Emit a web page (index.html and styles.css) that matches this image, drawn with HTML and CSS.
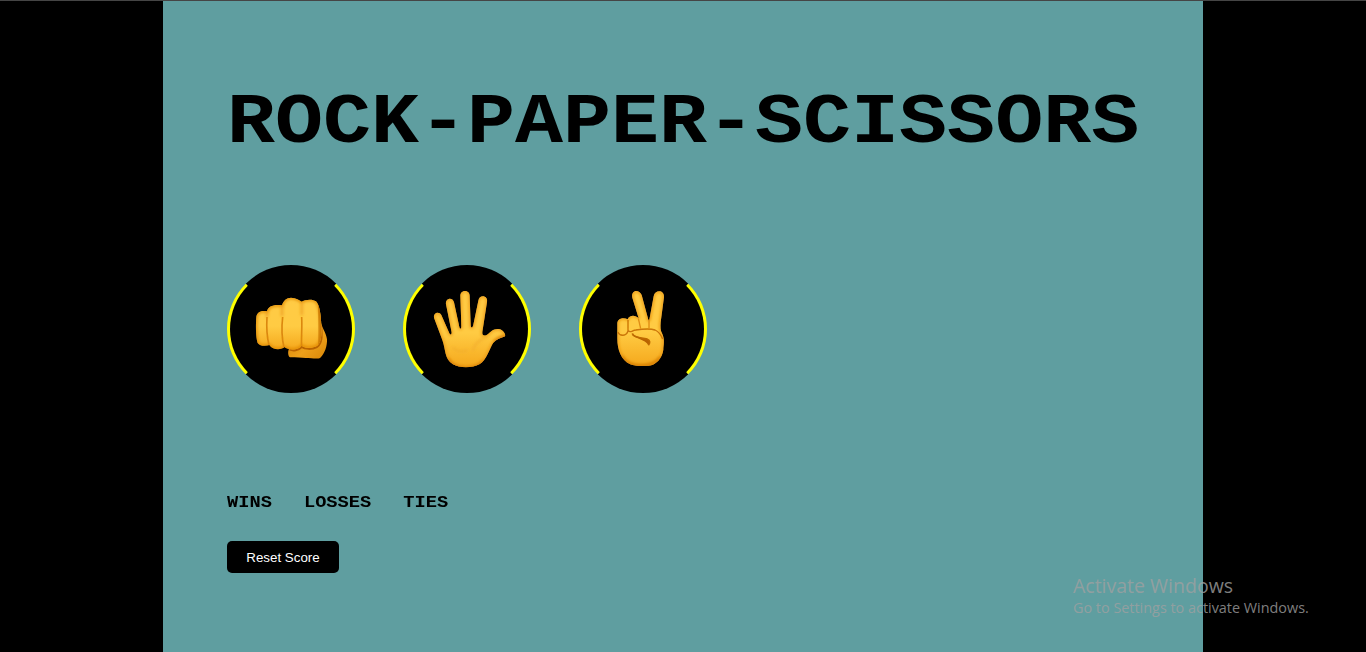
FILE: index.html
```html
<!DOCTYPE html>
<html lang="en">
<head>
<meta charset="utf-8">
<title>Rock-Paper-Scissors</title>
<link rel="stylesheet" href="styles.css">
</head>
<body>
<main class="game">
  <h1 class="title">ROCK-PAPER-SCISSORS</h1>
  <div class="moves">
    <button class="move" aria-label="Rock">
      <svg class="hand" viewBox="30 39 366 366">
        <defs>
          <linearGradient id="skin" x1="0" y1="0" x2="0" y2="1">
            <stop offset="0" stop-color="#ffcb45"/><stop offset=".55" stop-color="#ffcb43"/><stop offset="1" stop-color="#f5a81c"/>
          </linearGradient>
          <linearGradient id="thumb" x1="0" y1="0" x2="1" y2="1">
            <stop offset="0" stop-color="#c87600"/><stop offset=".6" stop-color="#eda01a"/><stop offset="1" stop-color="#d98708"/>
          </linearGradient>
          <filter id="soft" x="-30%" y="-30%" width="160%" height="160%"><feGaussianBlur stdDeviation="4"/></filter>
          <filter id="fine" x="-30%" y="-30%" width="160%" height="160%"><feGaussianBlur stdDeviation="1.8"/></filter>
          <clipPath id="fist"><path id="fistShape" d="M109 187C110 173 121 165 141 169C145 154 159 148 186 151C190 137 200 128 213 128C228 128 238 135 245 140C253 134 278 131 288 139C298 149 302 175 304 209C306 241 303 264 291 273C277 281 253 279 245 272C236 286 205 287 193 276C184 285 159 286 148 270C137 274 120 274 113 264C107 247 107 207 109 187Z"/></clipPath>
        </defs>
        <path fill="url(#thumb)" d="M302 200C306 220 318 231 321 253C322 273 314 296 301 308C291 315 265 307 210 307C203 304 203 287 208 280L246 267Z"/>
        <path filter="url(#fine)" fill="none" stroke="#b96300" stroke-width="6" d="M303 210C307 245 306 265 291 276C276 284 254 283 245 276C235 287 219 288 209 284"/>
        <use href="#fistShape" fill="url(#skin)"/>
        <g clip-path="url(#fist)" fill="none">
          <use href="#fistShape" stroke="#e28a05" stroke-width="8" filter="url(#soft)"/>
          <path filter="url(#fine)" stroke="#dc8810" stroke-width="5" d="M141 186C139 220 141 247 147 270M188 186C184 220 186 252 192 278M245 186C247 220 243 251 245 278"/>
          <path filter="url(#soft)" stroke="#e9941a" stroke-width="5" d="M141 169V187M186 151V184M245 140V181"/>
          <path filter="url(#soft)" stroke="#c77306" stroke-width="12" d="M296 145C303 180 304 250 299 276"/>
        </g>
      </svg>
    </button>
    <button class="move" aria-label="Paper">
      <svg class="hand" viewBox="30 39 366 366">
        <clipPath id="palm"><path id="palmShape" d="M114 188C112 172 130 169 136 180L160 235C164 243 169 237 166 227L150 148C147 130 169 124 174 142L190 216C192 224 196 222 196 214L193 122C193 103 221 103 221 122L224 211C225 221 230 219 232 209L247 137C250 117 277 121 273 141L259 231C258 243 265 243 272 240C286 229 292 220 309 222C322 224 330 239 327 244C315 248 300 254 292 263C282 276 272 316 250 328C229 339 192 340 171 328C144 311 150 285 139 255Z"/></clipPath>
        <use href="#palmShape" fill="url(#skin)"/>
        <g clip-path="url(#palm)" fill="none">
          <use href="#palmShape" stroke="#eb9817" stroke-width="7" filter="url(#soft)"/>
          <path filter="url(#soft)" stroke="#d98008" stroke-width="9" d="M155 311C175 349 238 348 264 319M296 262C308 248 319 246 330 244"/>
          <path filter="url(#soft)" stroke="#f1ac2b" stroke-width="5" d="M231 289C232 269 252 254 274 244M169 278C187 292 202 292 215 285"/>
        </g>
      </svg>
    </button>
    <button class="move" aria-label="Scissors">
      <svg class="hand" viewBox="30 39 366 366">
        <clipPath id="peace"><path id="peaceShape" d="M136 207C135 191 153 185 167 193C171 180 190 178 200 190L181 128C176 106 200 101 209 120L229 194C231 199 232 195 233 189L245 124C248 104 277 103 276 126L266 202C265 216 265 226 270 235C280 256 274 272 274 284C271 309 252 330 230 332C210 334 189 334 175 328C147 314 136 284 136 251Z"/></clipPath>
        <use href="#peaceShape" fill="url(#skin)"/>
        <g clip-path="url(#peace)" fill="none">
          <use href="#peaceShape" stroke="#e99311" stroke-width="7" filter="url(#soft)"/>
          <path filter="url(#fine)" fill="#b86200" d="M178 239C197 253 216 252 229 270C238 257 227 250 211 249Z"/>
          <path filter="url(#fine)" stroke="#ca7408" stroke-width="4" d="M137 231C144 245 163 244 168 228V195M169 227C174 235 181 226 191 225C211 222 235 220 249 225C262 231 268 242 272 252"/>
          <path filter="url(#fine)" stroke="#bd6900" stroke-width="5" d="M181 235C184 247 207 249 225 252C236 256 234 264 229 271"/>
          <path filter="url(#fine)" stroke="#df8c13" stroke-width="4" d="M199 190L206 221M231 192V220"/>
          <path filter="url(#soft)" stroke="#d47c05" stroke-width="8" d="M149 304C169 342 239 341 266 307"/>
        </g>
      </svg>
    </button>
  </div>
  <div class="scores">
    <h3 class="score">WINS</h3>
    <h3 class="score">LOSSES</h3>
    <h3 class="score">TIES</h3>
  </div>
  <button class="reset">Reset Score</button>
</main>
<aside class="notice">
  <div class="notice-title">Activate Windows</div>
  <div class="notice-text">Go to Settings to activate Windows.</div>
</aside>
</body>
</html>
```
FILE: styles.css
```css
* { box-sizing: border-box; }
body {
  margin: 0;
  height: 652px;
  overflow: hidden;
  background: #000;
  border-top: 1px solid #454545;
  display: flex;
  justify-content: center;
}
.game {
  width: 1040px;
  padding: 76px 64px 0;
  background: #5f9ea0;
  font-family: "Courier New", "Liberation Mono", monospace;
  color: #000;
}
.title {
  margin: 0;
  height: 92px;
  font-size: 80px;
  line-height: 92px;
  font-weight: 700;
  white-space: nowrap;
  transform: scaleY(.89);
}
.moves {
  display: flex;
  gap: 48px;
  margin-top: 96px;
}
.move {
  width: 128px;
  height: 128px;
  padding: 0;
  border: 3px solid;
  border-color: #000 #ff0;
  border-radius: 50%;
  background: #000;
}
.hand { display: block; width: 122px; height: 122px; }
.scores {
  display: flex;
  gap: 32px;
  margin-top: 99px;
}
.score {
  margin: 0;
  font-size: 18.72px;
  line-height: 21px;
  transform: scaleY(.93);
}
.reset {
  display: block;
  width: 112px;
  height: 32px;
  margin-top: 28px;
  padding: 0;
  border: 0;
  border-radius: 5px;
  background: #000;
  color: #fff;
  font: 13.333px Arial, "Liberation Sans", sans-serif;
}
/* System notice floating over the page corner */
.notice {
  position: absolute;
  left: 1073px;
  top: 573px;
  color: rgba(160, 160, 160, .8);
  font-family: "Segoe UI", "Open Sans", sans-serif;
  white-space: nowrap;
}
.notice-title { font-size: 19.5px; line-height: 25px; }
.notice-text { font-size: 14.4px; line-height: 20px; }
```
